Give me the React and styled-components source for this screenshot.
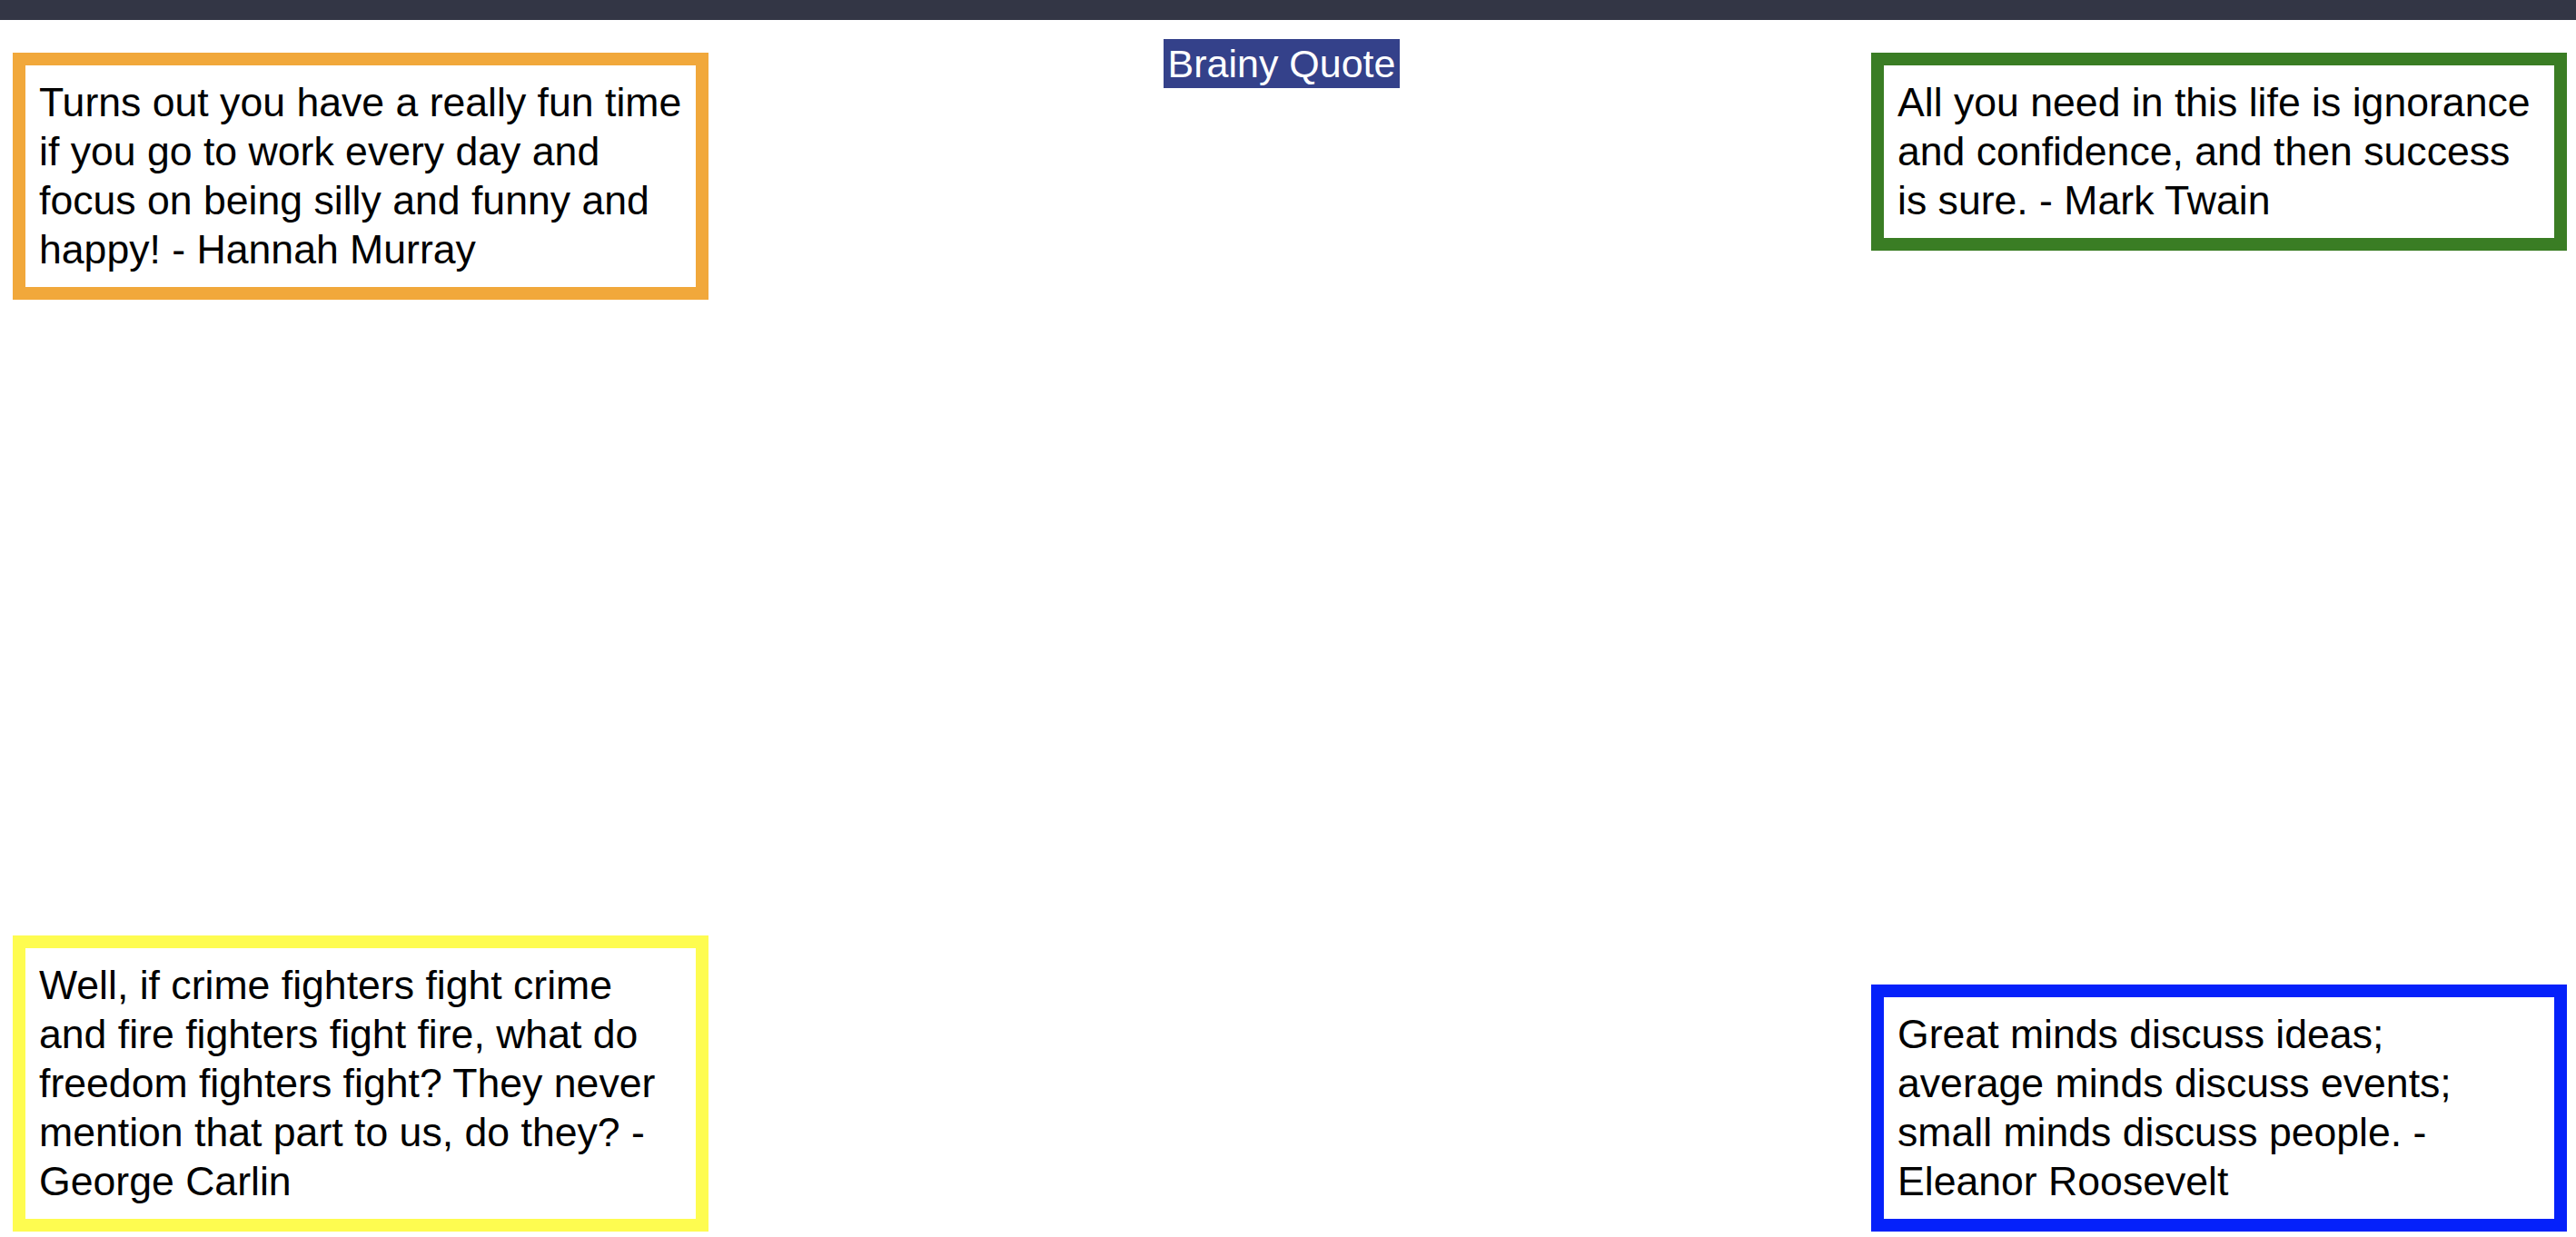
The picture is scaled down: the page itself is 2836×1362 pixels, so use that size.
import styled, { createGlobalStyle } from 'styled-components';

// lines are kept as in the reference so the wrapping matches
const quotes = {
    topLeft: {
        color: '#f1a83b',
        lines: [
            'Turns out you have a really fun time',
            'if you go to work every day and',
            'focus on being silly and funny and',
            'happy! - Hannah Murray',
        ],
    },
    topRight: {
        color: '#3a7d24',
        lines: [
            'All you need in this life is ignorance',
            'and confidence, and then success',
            'is sure. - Mark Twain',
        ],
    },
    bottomLeft: {
        color: '#fefc50',
        lines: [
            'Well, if crime fighters fight crime',
            'and fire fighters fight fire, what do',
            'freedom fighters fight? They never',
            'mention that part to us, do they? -',
            'George Carlin',
        ],
    },
    bottomRight: {
        color: '#0521fa',
        lines: [
            'Great minds discuss ideas;',
            'average minds discuss events;',
            'small minds discuss people. -',
            'Eleanor Roosevelt',
        ],
    },
};

const QuoteBox = ({ color, lines }) => (
    <Box $color={color}>
        <QuoteText>
            {lines.map((line) => (
                <Line key={line}>{line}</Line>
            ))}
        </QuoteText>
    </Box>
);

const App = () => {
    return (
        <>
            <GlobalStyle />
            <Page>
                <TopBar />
                <Content>
                    <Row>
                        <QuoteBox {...quotes.topLeft} />
                        <TitleWrap>
                            <Title>Brainy Quote</Title>
                        </TitleWrap>
                        <QuoteBox {...quotes.topRight} />
                    </Row>
                    <Row $bottom>
                        <QuoteBox {...quotes.bottomLeft} />
                        <div />
                        <QuoteBox {...quotes.bottomRight} />
                    </Row>
                </Content>
            </Page>
        </>
    );
};

export default App;

const GlobalStyle = createGlobalStyle`
    * {
        box-sizing: border-box;
    }
    body {
        margin: 0;
        background: #ffffff;
        font-family: 'Liberation Sans', Arial, sans-serif;
    }
`;

const Page = styled.div`
    width: 100%;
    height: 1362px;
    display: flex;
    flex-direction: column;
    overflow: hidden;
`;

const TopBar = styled.div`
    height: 22px;
    flex-shrink: 0;
    background-color: #333645;
`;

const Content = styled.div`
    flex: 1;
    display: flex;
    flex-direction: column;
    justify-content: space-between;
    padding: 21px 10px 6px 14px;
`;

const Box = styled.div`
    width: 766px;
    border: 14px solid ${({ $color }) => $color};
    background-color: #ffffff;
    padding: 14px 10px 14px 15px;
`;

const Row = styled.div`
    display: grid;
    grid-template-columns: 766px 1fr 766px;
    align-items: ${({ $bottom }) => ($bottom ? 'end' : 'start')};

    & > ${Box} {
        margin-top: ${({ $bottom }) => ($bottom ? '0' : '15px')};
    }
`;

const QuoteText = styled.p`
    margin: 0;
    font-size: 44.6px;
    line-height: 54px;
    color: #000000;
`;

const Line = styled.span`
    display: block;
    white-space: nowrap;
`;

const TitleWrap = styled.div`
    display: flex;
    justify-content: center;
    margin-right: 18px;
`;

const Title = styled.h1`
    margin: 0;
    height: 54px;
    padding: 0 5px;
    font-size: 43px;
    font-weight: 400;
    line-height: 54px;
    color: #ffffff;
    background-color: #34418a;
`;
